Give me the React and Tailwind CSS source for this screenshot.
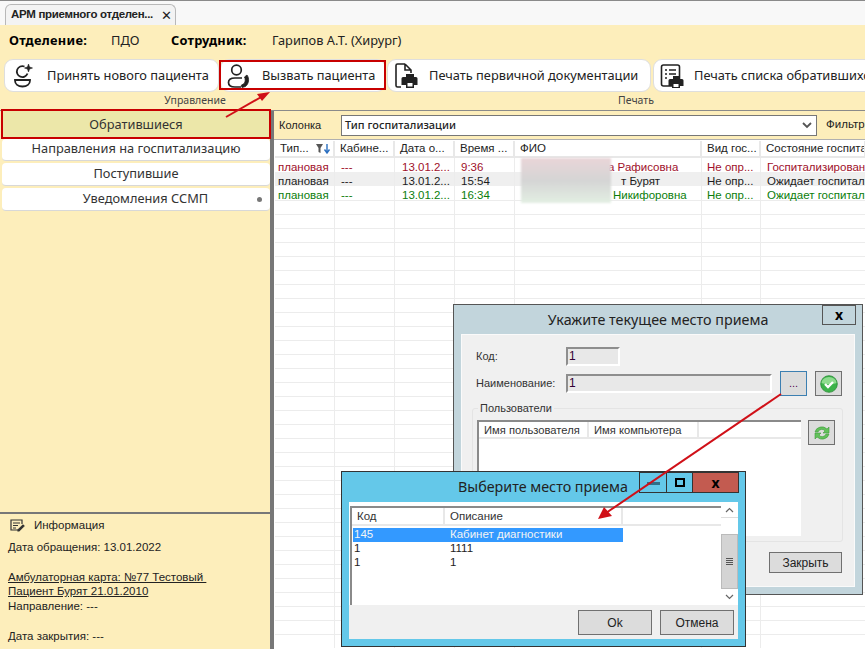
import React from "react";

const columns = [
  { title: "Тип...", w: "w-[60px]" },
  { title: "Кабине...", w: "w-[60px]" },
  { title: "Дата о...", w: "w-[60px]" },
  { title: "Время ...", w: "w-[60px]" },
  { title: "ФИО", w: "w-[187px]" },
  { title: "Вид гос...", w: "w-[59px]" },
  { title: "Состояние госпитали", w: "w-[105px]" },
];

const rows = [
  { color: "text-[#a0102a]", bg: "", time: "9:36", name: "а Рафисовна", pad: "pl-[93px]", state: "Госпитализирован" },
  { color: "text-[#1c1c1c]", bg: "bg-[#efefef]", time: "15:54", name: "т Бурят", pad: "pl-[106px]", state: "Ожидает госпитали" },
  { color: "text-[#0a7d0a]", bg: "", time: "16:34", name: "Никифоровна", pad: "pl-[98px]", state: "Ожидает госпитали" },
];

const emptyRows = Array.from({ length: 32 }, (_, i) => i);

const cell = "h-[14px] pt-[2px] leading-[14px] shrink-0 border-r border-[#ececec]";

const navItems = [
  { label: "Направления на госпитализацию", h: "h-[22px]", pad: "pb-[1px]" },
  { label: "Поступившие", h: "h-[23px]", pad: "pb-[1px]" },
  { label: "Уведомления ССМП", h: "h-[23px]", pad: "pb-[1px] pl-[19px]", dot: true },
];

const PatientPlusIcon = () => (
  <svg width="22" height="26" viewBox="0 0 22 26" fill="none" stroke="#222" strokeWidth="1.800">
    <path d="M11.500 3.500a5.500 5.500 0 1 0 3 7" />
    <path d="M15.500 1l1 3 3 1-3 1-1 3-1-3-3-1 3-1z" fill="#222" strokeWidth="0.600" />
    <path d="M2 17h15v.5c0 3.500-3 6-7.500 6S2 21 2 17.500z" />
  </svg>
);

const PatientCallIcon = () => (
  <svg width="24" height="24" viewBox="0 0 24 24" fill="none" stroke="#222" strokeWidth="1.700">
    <circle cx="9.500" cy="6" r="4.800" />
    <path d="M15 14H8c-4 0-6.500 1.800-6.500 4.500S4 23 8 23h6" />
    <path d="M20 11c2.500 3.500 2 8.500-1.500 11.500l-3.500 1-.8-2.200 3-1.800c1.300-2 1.300-4.500.3-6.500z" fill="#222" strokeWidth="0.800" />
  </svg>
);

const PrintDocIcon = () => (
  <svg width="24" height="26" viewBox="0 0 24 26" fill="none">
    <path d="M11 1H3.500C2.500 1 2 1.700 2 2.500v20c0 1 .7 1.500 1.500 1.500H7M11 1l6 6v3M11 1v6h6" stroke="#222" strokeWidth="1.600" />
    <path d="M9 14h3v-3h8v3h2a1.500 1.500 0 0 1 1.500 1.500V22H20v3h-8v-3H7.500v-6.500A1.500 1.500 0 0 1 9 14z" fill="#222" />
    <rect x="13.500" y="20" width="5" height="3.500" fill="#fff" />
  </svg>
);

const PrintListIcon = () => (
  <svg width="24" height="24" viewBox="0 0 24 24" fill="none">
    <rect x="1.500" y="1" width="18" height="21" rx="2" stroke="#222" strokeWidth="1.600" />
    <path d="M5 6h2M9 6h7M5 10h2M9 10h7M5 14h2" stroke="#222" strokeWidth="1.600" />
    <path d="M10 15h3v-3h6v3h3a1.500 1.500 0 0 1 1.500 1.500V22H20v2h-8v-2H8.500v-5.500A1.500 1.500 0 0 1 10 15z" fill="#222" />
    <rect x="13.500" y="20" width="5" height="3" fill="#fff" />
  </svg>
);

const NoteIcon = () => (
  <svg width="15" height="13" viewBox="0 0 15 13" fill="none" stroke="#333" strokeWidth="1.200">
    <path d="M10 11H1V1h11v4" />
    <path d="M3 4h7M3 6.500h5M3 9h3" />
    <path d="M8 11l5-5 1 1-5 5H8z" fill="#333" />
  </svg>
);

const FilterSortIcon = () => (
  <svg width="16" height="10" viewBox="0 0 16 10">
    <path d="M0 0h7L4.500 4v5L2.500 8V4z" fill="#555" />
    <path d="M11 0v8M8.500 5.500L11 9l2.500-3.500" stroke="#2b6fc0" strokeWidth="1.400" fill="none" />
  </svg>
);

const CheckIcon = () => (
  <svg width="18" height="18" viewBox="0 0 18 18">
    <circle cx="9" cy="9" r="8.300" fill="#3cb34a" stroke="#2a8a35" strokeWidth="0.800" />
    <path d="M1.500 8a7.500 6 0 0 1 15 0c-3 1.500-12 1.500-15 0z" fill="#8edc8e" />
    <path d="M5 9l3 3 5-5" stroke="#fff" strokeWidth="2.400" fill="none" />
  </svg>
);

const RefreshIcon = () => (
  <svg width="18" height="18" viewBox="0 0 18 18" fill="none">
    <path d="M2 8a7 6.500 0 0 1 12-3l2-2v6h-6l2-2a4 4 0 0 0-7 1z" fill="#62c25a" stroke="#3f9a3c" strokeWidth="0.600" />
    <path d="M16 10a7 6.500 0 0 1-12 3l-2 2V9h6l-2 2a4 4 0 0 0 7-1z" fill="#62c25a" stroke="#3f9a3c" strokeWidth="0.600" />
  </svg>
);

const ToolButton = ({ icon, label, className }) => (
  <button className={`h-[33px] bg-white rounded-[9px] border border-[#dedede] flex items-center shrink-0 ${className}`}>
    {icon}
    <span className="text-[12.800px] text-[#222] whitespace-nowrap">{label}</span>
  </button>
);

const WinButton = ({ children, className }) => (
  <button className={`bg-[#dcdcdc] border border-[#707070] text-[12px] text-[#222] ${className}`}>{children}</button>
);

const App = () => {
  return (
    <div className="relative w-[865px] h-[649px] overflow-hidden bg-white font-['Noto_Sans',sans-serif] flex flex-col">
      {/* Tabs */}
      <div className="h-[25px] bg-[#f8f8f8] border-t border-[#8a8a8a] pl-[5px] pt-[3px] shrink-0">
        <div className="w-[171px] h-[21px] bg-[#f3f3f3] border border-b-0 border-[#b8b8b8] rounded-t-[6px] flex items-center pl-[5px] pr-[3px] justify-between">
          <span className="text-[11.500px] font-bold text-[#222] font-['Liberation_Sans',sans-serif] tracking-[-0.300px] whitespace-nowrap">АРМ приемного отделен...</span>
          <span className="text-[13px] leading-none text-[#222]">✕</span>
        </div>
      </div>

      {/* Header */}
      <div className="bg-[#fdeebb] shrink-0 h-[86px] border-b border-[#8a8a8a]">
        <div className="h-[34px] flex items-center pl-[9px] pb-[2px] text-[12.800px] text-[#222] whitespace-nowrap">
          <span className="font-bold text-black w-[102px] tracking-[0.300px]">Отделение:</span>
          <span className="w-[60px]">ПДО</span>
          <span className="font-bold text-black w-[101px] tracking-[0.200px]">Сотрудник:</span>
          <span>Гарипов А.Т. (Хирург)</span>
        </div>
        <div className="flex pl-[4px] gap-[1px]">
          <ToolButton className="w-[215px] pl-[8px] gap-[12px]" icon={<PatientPlusIcon />} label="Принять нового пациента" />
          <ToolButton className="w-[166px] pl-[6px] gap-[11px]" icon={<PatientCallIcon />} label="Вызвать пациента" />
          <ToolButton className="w-[264px] pl-[6px] gap-[11px]" icon={<PrintDocIcon />} label="Печать первичной документации" />
          <ToolButton className="w-[240px] ml-[1px] pl-[6px] gap-[10px]" icon={<PrintListIcon />} label="Печать списка обратившихся" />
        </div>
        <div className="flex text-[10.500px] text-[#444] h-[15px] leading-[15px] mt-[1px]">
          <span className="w-[390px] shrink-0 text-center">Управление</span>
          <span className="w-[492px] shrink-0 text-center">Печать</span>
        </div>
      </div>

      {/* Body */}
      <div className="flex flex-1 min-h-0 bg-[#fdeebb]">
        {/* Left panel */}
        <div className="w-[274px] shrink-0 flex flex-col border-r-4 border-[#777]">
          <div className="flex flex-col flex-1 pl-[2px]">
            <div className="h-[27px] bg-[#ece7a9] flex items-center justify-center text-[12.800px] text-[#333]">Обратившиеся</div>
            <div className="flex flex-col gap-[2px] pt-[1px]">
              {navItems.map((item) => (
                <div
                  key={item.label}
                  className={`relative ${item.h} ${item.pad} bg-white rounded-[4px] border-b border-[#d8d8d8] flex items-center justify-center text-[12.800px] text-[#333] whitespace-nowrap`}
                >
                  {item.label}
                  {item.dot && <span className="absolute right-[8px] top-[9px] w-[5px] h-[5px] rounded-full bg-[#777]" />}
                </div>
              ))}
            </div>
          </div>
          <div className="h-[137px] border-t-2 border-[#777] pl-[8px] pt-[4px] text-[11.500px] leading-[15px] text-[#222] font-['Liberation_Sans',sans-serif] shrink-0">
            <div className="flex items-center gap-[9px] h-[14px] pl-[2px] text-[11.500px]">
              <NoteIcon />
              <span>Информация</span>
            </div>
            <div className="mt-[8px]">Дата обращения: 13.01.2022</div>
            <div className="mt-[15px] h-[14px] underline whitespace-pre">Амбулаторная карта: №77 Тестовый </div>
            <div className="underline">Пациент Бурят 21.01.2010</div>
            <div>Направление: ---</div>
            <div className="mt-[15px]">Дата закрытия: ---</div>
          </div>
        </div>

        {/* Right panel */}
        <div className="flex-1 min-w-0 flex flex-col">
          <div className="h-[29px] flex items-center pl-[5px] text-[11px] font-['Liberation_Sans',sans-serif] text-[#222] border-b border-[#b0b0b0] shrink-0 whitespace-nowrap overflow-hidden">
            <span className="w-[62px] shrink-0">Колонка</span>
            <div className="w-[476px] h-[21px] bg-white border border-[#777] flex items-center justify-between pl-[3px] pr-[4px] font-['Noto_Sans',sans-serif] font-medium text-[11px] shrink-0">
              <span>Тип госпитализации</span>
              <svg width="10" height="7" viewBox="0 0 10 7" fill="none" stroke="#555" strokeWidth="1.800"><path d="M1 1l4 4 4-4" /></svg>
            </div>
            <span className="ml-[9px] text-[11.500px]">Фильтр</span>
          </div>
          <div className="relative flex-1 min-h-0 bg-white pl-[1px] flex flex-col overflow-hidden font-['Liberation_Sans',sans-serif] text-[11.500px]">
            <div className="flex h-[17px] mt-[1px] border-b-2 border-[#e8e8e8] shrink-0 whitespace-nowrap">
              {columns.map((col, i) => (
                <div key={col.title} className={`${col.w} shrink-0 border-r-2 border-[#e8e8e8] pl-[5px] flex items-center justify-between overflow-hidden text-[#222]`}>
                  <span>{col.title}</span>
                  {i === 0 && <span className="pr-[1px]"><FilterSortIcon /></span>}
                </div>
              ))}
            </div>
            <div>
              {rows.map((row) => (
                <div key={row.time} className={`flex h-[14px] whitespace-nowrap ${row.color} ${row.bg}`}>
                  <div className={`${cell} w-[60px] pl-[3px]`}>плановая</div>
                  <div className={`${cell} w-[60px] pl-[6px]`}>---</div>
                  <div className={`${cell} w-[60px] pl-[7px]`}>13.01.2...</div>
                  <div className={`${cell} w-[60px] pl-[6px]`}>{row.time}</div>
                  <div className={`${cell} w-[187px] ${row.pad}`}>{row.name}</div>
                  <div className={`${cell} w-[59px] pl-[5px]`}>Не опр...</div>
                  <div className={`${cell} w-[105px] pl-[6px]`}>{row.state}</div>
                </div>
              ))}
              {emptyRows.map((n) => (
                <div key={n} className="flex h-[14px] border-t border-[#ececec]">
                  {columns.map((col) => (
                    <div key={col.title} className={`${col.w} shrink-0 border-r border-[#ececec]`} />
                  ))}
                </div>
              ))}
            </div>
            {/* blurred names */}
            <div className="absolute left-[247px] top-[18px] w-[90px] h-[45px] bg-gradient-to-b from-[#e9d5d8] via-[#d5d5d5] to-[#e3efe3] blur-[1px]" />
          </div>
        </div>
      </div>

      {/* Window: current place */}
      <div className="absolute left-[453px] top-[304px] w-[410px] h-[291px] bg-[#c2d5dc] border border-[#555] px-[7px] flex flex-col">
        <div className="relative h-[29px] shrink-0 flex items-center justify-center text-[14.300px] text-[#222]">
          Укажите текущее место приема
          <button className="absolute right-[-1px] top-0 w-[34px] h-[20px] border border-[#555] flex items-center justify-center text-[14px] font-bold leading-none text-black">x</button>
        </div>
        <div className="h-[253px] bg-[#f0f0f0] border border-[#fafafa] flex flex-col font-['Liberation_Sans',sans-serif] text-[11px] text-[#333] shrink-0">
          <div className="flex items-center h-[19px] mt-[12px] pl-[14px]">
            <span className="w-[90px]">Код:</span>
            <div className="w-[54px] h-[19px] bg-[#e8e8e8] border-2 border-[#8e8e8e] border-r-white border-b-white pl-[1px] text-[12px] leading-[15px] text-[#303]">1</div>
          </div>
          <div className="flex items-center mt-[5px] pl-[14px] h-[25px]">
            <span className="w-[90px]">Наименование:</span>
            <div className="w-[206px] h-[19px] bg-[#e8e8e8] border-2 border-[#8e8e8e] border-r-white border-b-white pl-[1px] text-[12px] leading-[15px] text-[#303]">1</div>
            <button className="ml-[8px] w-[27px] h-[25px] bg-[#dcdcdc] border border-[#3c7fb1] text-[11px] text-[#505]">...</button>
            <button className="ml-[8px] w-[27px] h-[25px] bg-[#dcdcdc] border border-[#707070] flex items-center justify-center"><CheckIcon /></button>
          </div>
          <div className="relative mt-[12px] ml-[10px] w-[371px] h-[134px] border border-[#e4e4e4] rounded-[3px] flex items-start shrink-0">
            <span className="absolute left-[5px] top-[-8px] bg-[#f0f0f0] px-[2px] leading-[14px]">Пользователи</span>
            <div className="ml-[4px] mt-[11px] w-[324px] h-[116px] bg-white border-t-2 border-l-2 border-[#8a8a8a]">
              <div className="flex h-[17px] border-b-2 border-[#e8e8e8] text-[11.200px] whitespace-nowrap">
                <span className="w-[110px] pl-[5px] border-r-2 border-[#e8e8e8]">Имя пользователя</span>
                <span className="w-[110px] pl-[5px] border-r-2 border-[#e8e8e8]">Имя компьютера</span>
              </div>
            </div>
            <button className="ml-[7px] mt-[11px] w-[27px] h-[25px] bg-[#dcdcdc] border border-[#707070] flex items-center justify-center"><RefreshIcon /></button>
          </div>
          <div className="flex justify-end pr-[12px] mt-[10px] shrink-0">
            <WinButton className="w-[73px] h-[21px]">Закрыть</WinButton>
          </div>
        </div>
      </div>

      {/* Window: choose place */}
      <div className="absolute left-[341px] top-[471px] w-[405px] h-[176px] bg-[#64c8e9] border border-[#333] px-[7px] flex flex-col">
        <div className="relative h-[30px] shrink-0 flex items-center text-[14.300px] text-[#222] pl-[109px]">
          Выберите место приема
          <div className="absolute right-[-1px] top-0 flex h-[21px]">
            <button className="w-[28px] border border-[#333] flex items-center justify-center"><span className="w-[13px] h-[3px] bg-[#2f6f88] mt-[2px]" /></button>
            <button className="w-[26px] border border-l-0 border-[#333] flex items-center justify-center"><span className="w-[10px] h-[9px] border-2 border-black" /></button>
            <button className="w-[46px] border border-l-0 border-[#333] bg-[#c35b50] text-[14px] font-bold leading-none text-black">x</button>
          </div>
        </div>
        <div className="h-[137px] bg-[#f0f0f0] flex flex-col font-['Liberation_Sans',sans-serif] text-[11.500px] shrink-0">
          <div className="h-[103px] flex bg-white shrink-0 pl-[1px]">
            <div className="flex-1 border-t-2 border-l-2 border-[#8a8a8a] mt-[4px]">
              <div className="flex h-[18px] pt-[1px] border-b-2 border-[#e8e8e8] text-[#333] items-center">
                <span className="w-[93px] pl-[5px] border-r-2 border-[#e8e8e8]">Код</span>
                <span className="w-[178px] pl-[5px] border-r-2 border-[#e8e8e8]">Описание</span>
              </div>
              <div className="pl-[1px] pt-[2px] text-[#222]">
                <div className="flex w-[270px] h-[14px] items-center bg-[#3399ff] text-[#f4f4f4]"><span className="w-[97px] pl-[1px]">145</span><span>Кабинет диагностики</span></div>
                <div className="flex h-[14px] items-center"><span className="w-[97px] pl-[1px]">1</span><span>1111</span></div>
                <div className="flex h-[14px] items-center"><span className="w-[97px] pl-[1px]">1</span><span>1</span></div>
              </div>
            </div>
            <div className="w-[17px] shrink-0 bg-[#f0f0f0] flex flex-col items-center text-[#666]">
              <div className="h-[16px] w-full bg-white border-b border-[#ddd] flex items-center justify-center"><svg width="9" height="6" viewBox="0 0 9 6" fill="none" stroke="#666" strokeWidth="1.200"><path d="M1 5l3.500-3.500L8 5" /></svg></div>
              <div className="h-[16px] w-full bg-white" />
              <div className="h-[55px] w-full bg-[#d4d4d4] border border-[#bbb] flex flex-col gap-[1px] items-center justify-center">
                <span className="w-[7px] h-[1px] bg-[#555]" />
                <span className="w-[7px] h-[1px] bg-[#555]" />
                <span className="w-[7px] h-[1px] bg-[#555]" />
                <span className="w-[7px] h-[1px] bg-[#555]" />
              </div>
              <div className="flex-1 w-full bg-white flex items-center justify-center"><svg width="9" height="6" viewBox="0 0 9 6" fill="none" stroke="#666" strokeWidth="1.200"><path d="M1 1l3.500 3.500L8 1" /></svg></div>
            </div>
          </div>
          <div className="flex justify-end gap-[8px] pt-[5px] pr-[4px]">
            <WinButton className="w-[74px] h-[25px]">Ok</WinButton>
            <WinButton className="w-[74px] h-[25px]">Отмена</WinButton>
          </div>
        </div>
      </div>

      {/* Red highlights */}
      <div className="absolute left-[219px] top-[60px] w-[167px] h-[30px] border-2 border-[#c80000] pointer-events-none" />
      <div className="absolute left-[1px] top-[109px] w-[270px] h-[30px] border-2 border-[#c80000] pointer-events-none" />
      <svg className="absolute left-0 top-0 pointer-events-none" width="865" height="649">
        <path d="M226 117L263 96" stroke="#d01018" strokeWidth="2" />
        <path d="M270 92L257 94 262 101z" fill="#d01018" />
        <path d="M781 394L606 513" stroke="#d01018" strokeWidth="2" />
        <path d="M598 519L604 507 612 516z" fill="#d01018" />
      </svg>
    </div>
  );
};

export default App;
